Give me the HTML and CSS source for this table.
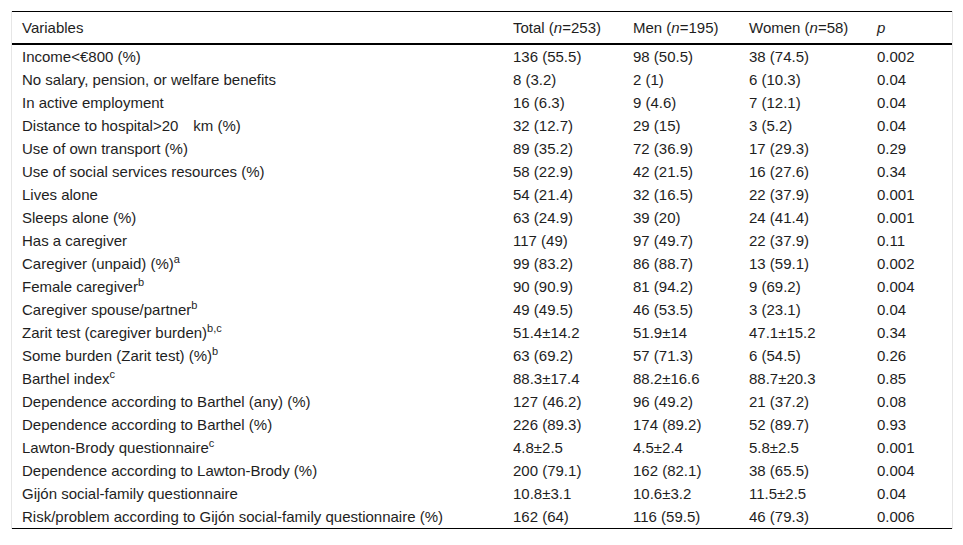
FILE: index.html
```html
<!DOCTYPE html>
<html>
<head>
<meta charset="utf-8">
<link rel="stylesheet" href="styles.css">
</head>
<body>
<div class="wrap">
<table class="tbl">
<colgroup>
<col class="c1"><col class="c2"><col class="c3"><col class="c4"><col class="c5">
</colgroup>
<thead>
<tr><th>Variables</th><th>Total (<i>n</i>=253)</th><th>Men (<i>n</i>=195)</th><th>Women (<i>n</i>=58)</th><th><i>p</i></th></tr>
</thead>
<tbody>
<tr><td>Income&lt;€800 (%)</td><td>136 (55.5)</td><td>98 (50.5)</td><td>38 (74.5)</td><td>0.002</td></tr>
<tr><td>No salary, pension, or welfare benefits</td><td>8 (3.2)</td><td>2 (1)</td><td>6 (10.3)</td><td>0.04</td></tr>
<tr><td>In active employment</td><td>16 (6.3)</td><td>9 (4.6)</td><td>7 (12.1)</td><td>0.04</td></tr>
<tr><td>Distance to hospital&gt;20<span class="sp"></span>km (%)</td><td>32 (12.7)</td><td>29 (15)</td><td>3 (5.2)</td><td>0.04</td></tr>
<tr><td>Use of own transport (%)</td><td>89 (35.2)</td><td>72 (36.9)</td><td>17 (29.3)</td><td>0.29</td></tr>
<tr><td>Use of social services resources (%)</td><td>58 (22.9)</td><td>42 (21.5)</td><td>16 (27.6)</td><td>0.34</td></tr>
<tr><td>Lives alone</td><td>54 (21.4)</td><td>32 (16.5)</td><td>22 (37.9)</td><td>0.001</td></tr>
<tr><td>Sleeps alone (%)</td><td>63 (24.9)</td><td>39 (20)</td><td>24 (41.4)</td><td>0.001</td></tr>
<tr><td>Has a caregiver</td><td>117 (49)</td><td>97 (49.7)</td><td>22 (37.9)</td><td>0.11</td></tr>
<tr><td>Caregiver (unpaid) (%)<sup>a</sup></td><td>99 (83.2)</td><td>86 (88.7)</td><td>13 (59.1)</td><td>0.002</td></tr>
<tr><td>Female caregiver<sup>b</sup></td><td>90 (90.9)</td><td>81 (94.2)</td><td>9 (69.2)</td><td>0.004</td></tr>
<tr><td>Caregiver spouse/partner<sup>b</sup></td><td>49 (49.5)</td><td>46 (53.5)</td><td>3 (23.1)</td><td>0.04</td></tr>
<tr><td>Zarit test (caregiver burden)<sup>b,c</sup></td><td>51.4±14.2</td><td>51.9±14</td><td>47.1±15.2</td><td>0.34</td></tr>
<tr><td>Some burden (Zarit test) (%)<sup>b</sup></td><td>63 (69.2)</td><td>57 (71.3)</td><td>6 (54.5)</td><td>0.26</td></tr>
<tr><td>Barthel index<sup>c</sup></td><td>88.3±17.4</td><td>88.2±16.6</td><td>88.7±20.3</td><td>0.85</td></tr>
<tr><td>Dependence according to Barthel (any) (%)</td><td>127 (46.2)</td><td>96 (49.2)</td><td>21 (37.2)</td><td>0.08</td></tr>
<tr><td>Dependence according to Barthel (%)</td><td>226 (89.3)</td><td>174 (89.2)</td><td>52 (89.7)</td><td>0.93</td></tr>
<tr><td>Lawton-Brody questionnaire<sup>c</sup></td><td>4.8±2.5</td><td>4.5±2.4</td><td>5.8±2.5</td><td>0.001</td></tr>
<tr><td>Dependence according to Lawton-Brody (%)</td><td>200 (79.1)</td><td>162 (82.1)</td><td>38 (65.5)</td><td>0.004</td></tr>
<tr><td>Gijón social-family questionnaire</td><td>10.8±3.1</td><td>10.6±3.2</td><td>11.5±2.5</td><td>0.04</td></tr>
<tr><td>Risk/problem according to Gijón social-family questionnaire (%)</td><td>162 (64)</td><td>116 (59.5)</td><td>46 (79.3)</td><td>0.006</td></tr>
</tbody>
</table>
</div>
</body>
</html>
```

FILE: styles.css
```css
html, body {
  margin: 0;
  padding: 0;
  background: #fff;
}
body {
  font-family: "Liberation Sans", Arial, sans-serif;
  font-size: 15px;
  color: #1e1e1e;
}
.wrap {
  margin: 11px 10px 0 11px;
  width: 942px;
  border-left: 1px solid #e6e6e6;
  border-right: 1px solid #e6e6e6;
  box-sizing: border-box;
}
.tbl {
  width: 940px;
  border-collapse: collapse;
  table-layout: fixed;
}
.c1 { width: 491px; }
.c2 { width: 120px; }
.c3 { width: 116px; }
.c4 { width: 128px; }
.c5 { width: 85px; }
.tbl thead tr {
  border-top: 1px solid #000;
  border-bottom: 2px solid #000;
}
.tbl tbody {
  border-bottom: 1px solid #000;
}
.tbl th {
  font-weight: normal;
  text-align: left;
  height: 31px;
  padding: 0 0 0 10px;
  vertical-align: middle;
  line-height: 17px;
}
.tbl td {
  height: 23px;
  padding: 0 0 0 10px;
  vertical-align: middle;
  line-height: 17px;
  white-space: nowrap;
}
.tbl sup {
  font-size: 11px;
  line-height: 0;
  vertical-align: 6px;
}
.sp {
  display: inline-block;
  width: 15px;
}
```
